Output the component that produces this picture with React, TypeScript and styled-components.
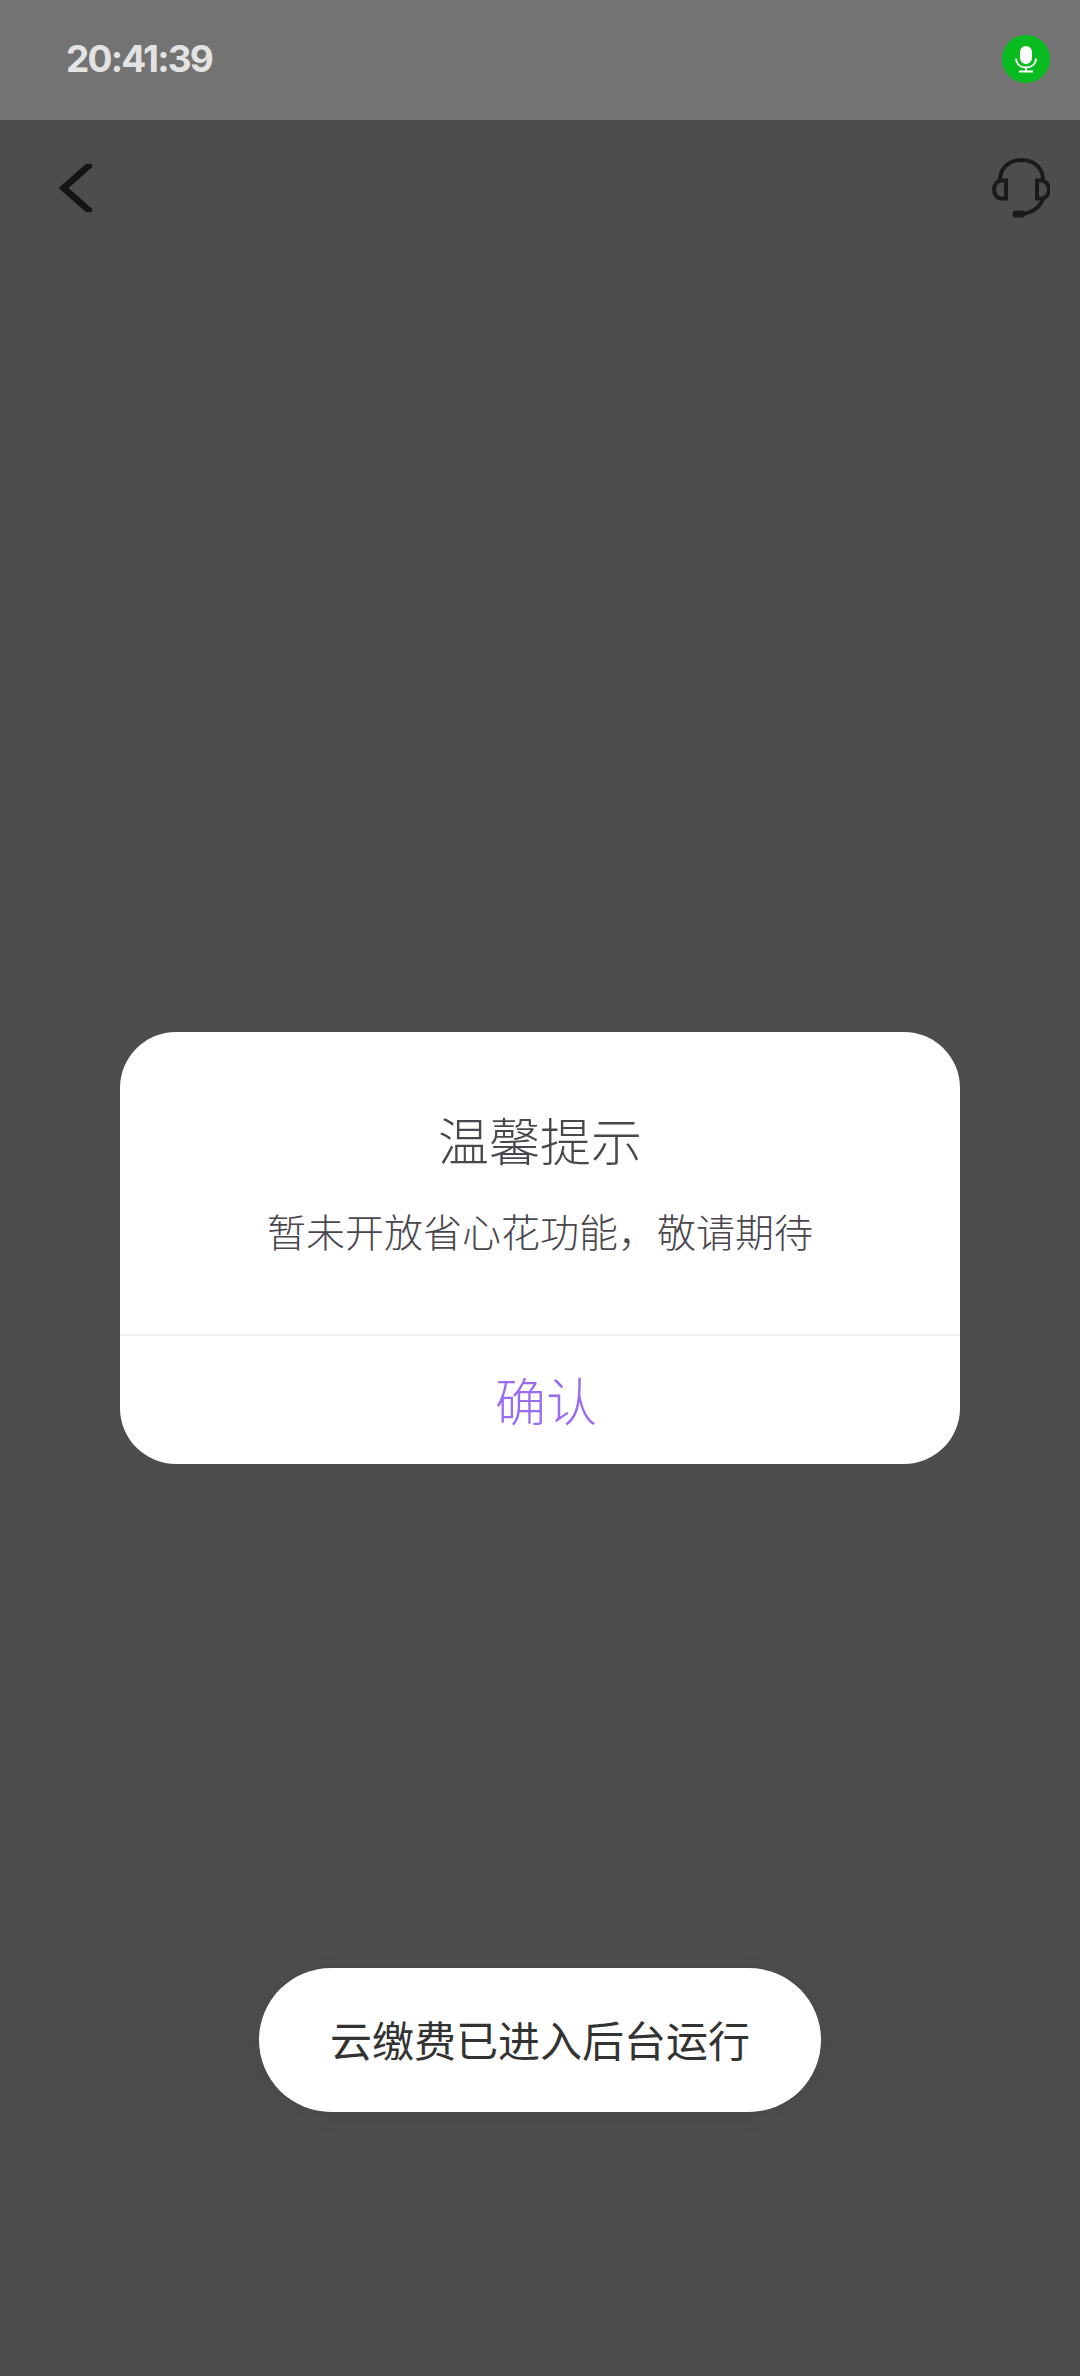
import React from 'react';
import styled, { createGlobalStyle } from 'styled-components';

const GlobalStyle = createGlobalStyle`
  html, body {
    margin: 0;
    padding: 0;
    background: #4d4d4d;
  }
  * {
    box-sizing: border-box;
  }
`;

const cjk = `"Noto Sans CJK SC", "Noto Sans", sans-serif`;

const Page = styled.div`
  position: relative;
  width: 1080px;
  height: 2376px;
  overflow: hidden;
  background: #4d4d4d;
`;

const StatusBar = styled.div`
  height: 120px;
  padding: 0 20px 0 66px;
  display: flex;
  align-items: center;
  justify-content: space-between;
  background: #737373;
`;

const Clock = styled.span`
  font-family: Inter, "Liberation Sans", sans-serif;
  font-size: 37px;
  font-weight: 700;
  letter-spacing: -1.8px;
  color: #e3e3e3;
  position: relative;
  top: -2px;
`;

const MicBadge = styled.div`
  width: 48px;
  height: 48px;
  margin-top: -2px;
  margin-right: 10px;
  border-radius: 50%;
  background: #08bb1f;
  display: flex;
  align-items: center;
  justify-content: center;
`;

const NavBar = styled.div`
  height: 136px;
  padding: 0 30px 0 56px;
  display: flex;
  align-items: center;
  justify-content: space-between;
`;

const ModalLayer = styled.div`
  position: absolute;
  inset: 0;
  padding-top: 1032px;
  display: flex;
  flex-direction: column;
  align-items: center;
`;

const Dialog = styled.div`
  width: 840px;
  height: 432px;
  border-radius: 56px;
  background: #fff;
  display: flex;
  flex-direction: column;
  font-family: ${cjk};
`;

const DialogBody = styled.div`
  height: 302px;
  padding-top: 74px;
  display: flex;
  flex-direction: column;
  align-items: center;
`;

const Title = styled.div`
  font-size: 51px;
  line-height: 66px;
  font-weight: 300;
  color: #4a464e;
`;

const Message = styled.div`
  margin-top: 32px;
  font-size: 39px;
  line-height: 52px;
  font-weight: 300;
  color: #4a464e;
`;

const ConfirmButton = styled.div`
  flex: 1;
  padding: 0 0 2px 12px;
  border-top: 2px solid #f0f0f0;
  display: flex;
  align-items: center;
  justify-content: center;
  font-size: 51px;
  font-weight: 300;
  color: #9a6df0;
`;

const Toast = styled.div`
  width: 562px;
  height: 144px;
  margin-top: 504px;
  padding-bottom: 4px;
  border-radius: 72px;
  background: #fff;
  box-shadow: 0 4px 24px rgba(0, 0, 0, 0.06);
  display: flex;
  align-items: center;
  justify-content: center;
  font-family: ${cjk};
  font-size: 42px;
  color: #333;
`;

const MicIcon = () => (
  <svg width="24" height="28" viewBox="0 0 24 28" fill="none">
    <rect x="6" y="1" width="12" height="18" rx="6" fill="#fff" />
    <path d="M2 13.5c0 5.5 4.500 9 10 9s10-3.500 10-9" stroke="#fff" strokeWidth="1.800" />
    <path d="M12 22.500V26M5 26.500h14" stroke="#fff" strokeWidth="1.800" />
  </svg>
);

const BackIcon = () => (
  <svg width="36" height="48" viewBox="0 0 36 48" fill="none">
    <path d="M37 -2 7.500 24l29.500 26" stroke="#141414" strokeWidth="6.500" />
  </svg>
);

const HeadsetIcon = () => (
  <svg width="60" height="60" viewBox="0 0 60 60" fill="none" stroke="#1a1a1a" strokeWidth="4">
    <path d="M10 22C10 10 19 2 31.500 2S53 10 53 22" />
    <path d="M16 22.500h-4c-4.500 0-8 4-8 9s3.500 9 8 9h4z" />
    <path d="M47 22.500h4c4.500 0 8 4 8 9s-3.500 9-8 9h-4z" />
    <path d="M53 41c-3 8-11 14-21 15" />
    <path d="M26 56h6" strokeWidth="7" strokeLinecap="round" />
  </svg>
);

const App = () => {
  return (
    <Page>
      <GlobalStyle />
      <StatusBar>
        <Clock>20:41:39</Clock>
        <MicBadge>
          <MicIcon />
        </MicBadge>
      </StatusBar>
      <NavBar>
        <BackIcon />
        <HeadsetIcon />
      </NavBar>
      <ModalLayer>
        <Dialog>
          <DialogBody>
            <Title>温馨提示</Title>
            <Message>暂未开放省心花功能，敬请期待</Message>
          </DialogBody>
          <ConfirmButton>确认</ConfirmButton>
        </Dialog>
        <Toast>云缴费已进入后台运行</Toast>
      </ModalLayer>
    </Page>
  );
};

export default App;
